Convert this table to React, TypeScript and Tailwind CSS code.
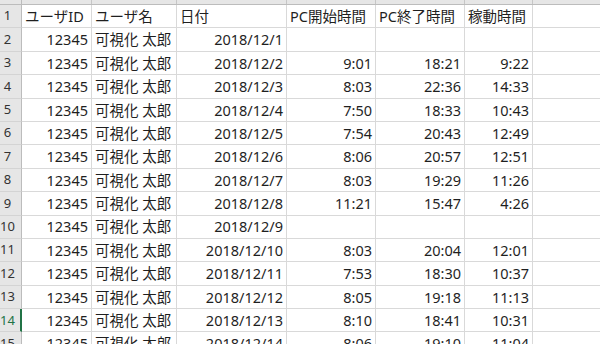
const cols = [
  { w: "w-[70px]", align: "text-right" },
  { w: "w-[85px]", align: "text-left" },
  { w: "w-[110px]", align: "text-right" },
  { w: "w-[89px]", align: "text-right" },
  { w: "w-[89px]", align: "text-right" },
  { w: "w-[68px]", align: "text-right" },
  { w: "w-[80px]", align: "text-right" },
];

const header = ["ユーザID", "ユーザ名", "日付", "PC開始時間", "PC終了時間", "稼動時間", ""];

const data: string[][] = [
  ["2018/12/1", "", "", ""],
  ["2018/12/2", "9:01", "18:21", "9:22"],
  ["2018/12/3", "8:03", "22:36", "14:33"],
  ["2018/12/4", "7:50", "18:33", "10:43"],
  ["2018/12/5", "7:54", "20:43", "12:49"],
  ["2018/12/6", "8:06", "20:57", "12:51"],
  ["2018/12/7", "8:03", "19:29", "11:26"],
  ["2018/12/8", "11:21", "15:47", "4:26"],
  ["2018/12/9", "", "", ""],
  ["2018/12/10", "8:03", "20:04", "12:01"],
  ["2018/12/11", "7:53", "18:30", "10:37"],
  ["2018/12/12", "8:05", "19:18", "11:13"],
  ["2018/12/13", "8:10", "18:41", "10:31"],
  ["2018/12/14", "8:06", "19:10", "11:04"],
];

function RowHead({ n, active }: { n: number; active?: boolean }) {
  return (
    <div
      className={
        "flex h-full w-[22px] shrink-0 items-center border-b border-[#d4d4d4] bg-[#e6e6e6] text-[13px] " +
        (active ? "border-r-2 border-r-[#217346] text-[#217346]" : "border-r border-r-[#bcbcbc] text-[#333]")
      }
    >
      <span className="w-[15px] text-center">{n}</span>
    </div>
  );
}

export default function App() {
  const rows = data.map((d) => ["12345", "可視化 太郎", ...d, ""]);

  return (
    <div
      className="h-[344px] w-[600px] overflow-hidden bg-white text-[14.5px] text-[#1f1f1f]"
      style={{ fontFamily: '"Noto Sans", "Noto Sans CJK JP", sans-serif' }}
    >
      {/* column header strip, mostly cut off */}
      <div className="flex h-[5px] border-b border-[#bcbcbc] bg-[#e6e6e6]">
        <div className="w-[22px] shrink-0 border-r border-[#bcbcbc]" />
        {cols.map((c, i) => (
          <div key={i} className={`${c.w} shrink-0 border-r border-[#c6c6c6]`} />
        ))}
      </div>

      <div className="flex h-[23.4px]">
        <RowHead n={1} />
        {header.map((h, i) => (
          <div
            key={i}
            className={`${cols[i].w} flex shrink-0 items-center whitespace-nowrap border-b border-r border-[#d9d9d9] px-[3px] leading-none`}
          >
            {h}
          </div>
        ))}
      </div>

      {rows.map((r, ri) => (
        <div key={ri} className="flex h-[23.4px]">
          <RowHead n={ri + 2} active={ri + 2 === 14} />
          {r.map((v, i) => (
            <div
              key={i}
              className={`${cols[i].w} ${cols[i].align} flex shrink-0 items-center border-b border-r border-[#d9d9d9] px-[3px] leading-none`}
            >
              <span className="w-full whitespace-nowrap">{v}</span>
            </div>
          ))}
        </div>
      ))}
    </div>
  );
}
